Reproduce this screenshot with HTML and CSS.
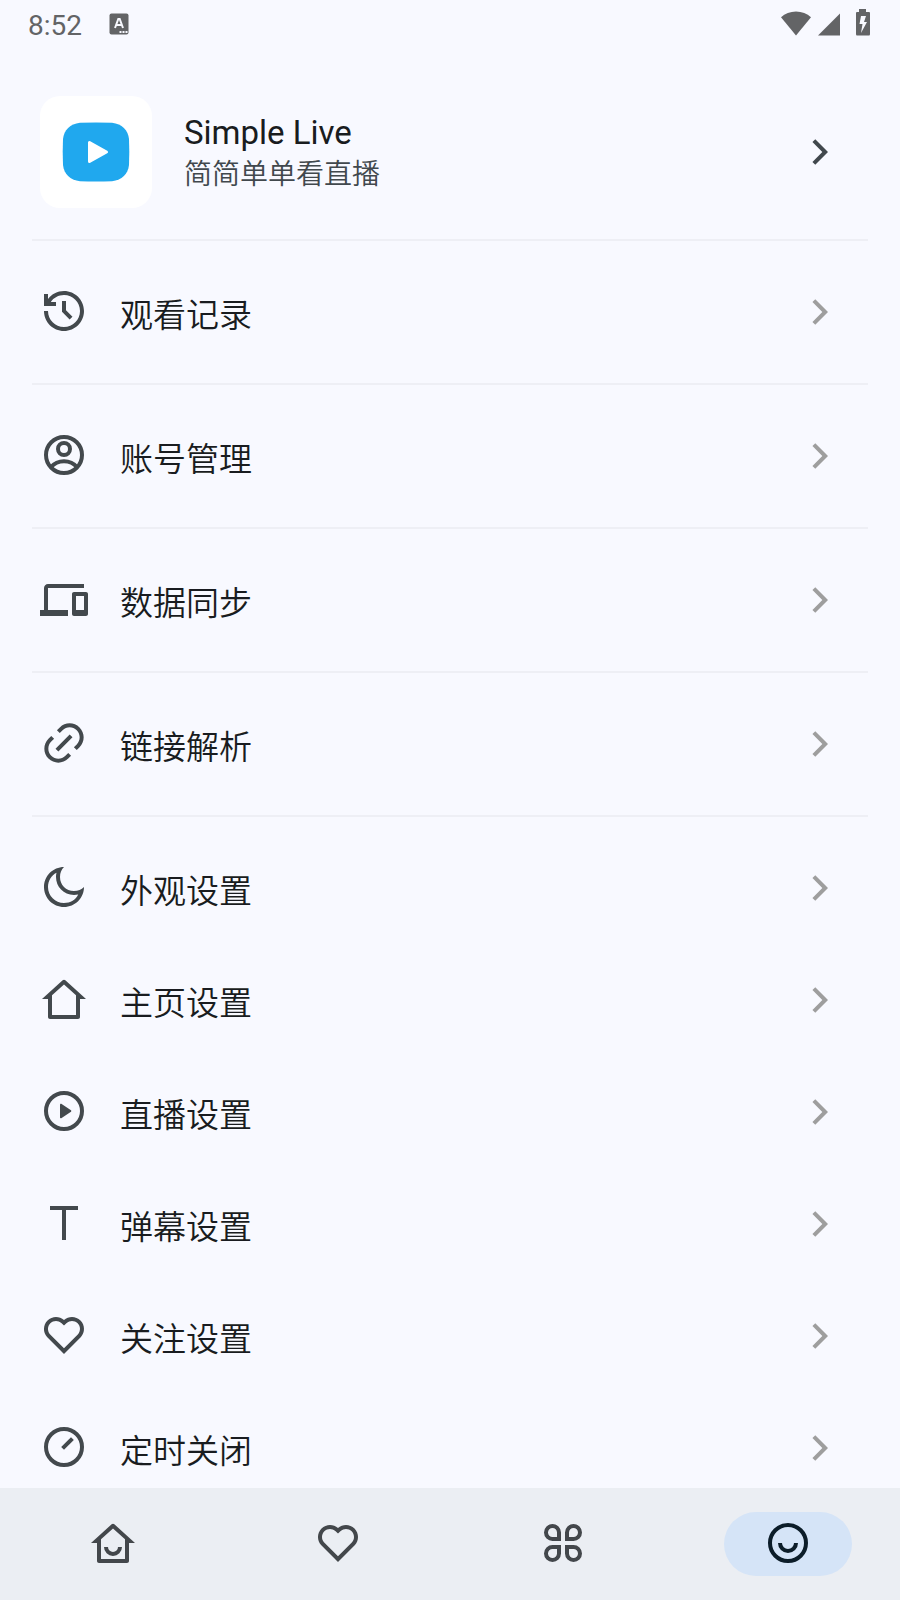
FILE: index.html
```html
<!DOCTYPE html>
<html lang="zh-CN">
<head>
<meta charset="utf-8">
<meta name="viewport" content="width=device-width, initial-scale=1">
<title>Simple Live</title>
<link rel="stylesheet" href="styles.css">
</head>
<body>
<svg class="sprite" aria-hidden="true">
  <symbol id="chevron" viewBox="0 0 24 24"><path d="M13.17 12 8.22 7.05 9.64 5.64 16 12l-6.36 6.36-1.42-1.41z"/></symbol>
  <symbol id="heart" viewBox="0 0 24 24"><path d="M12.001 4.529C14.35 2.42 17.98 2.49 20.243 4.757C22.505 7.025 22.583 10.637 20.479 12.993L12 21.485L3.521 12.993C1.417 10.637 1.496 7.019 3.757 4.757C6.022 2.493 9.645 2.417 12.001 4.529ZM18.827 6.17C17.328 4.668 14.908 4.607 13.337 6.017L12.002 7.215L10.666 6.018C9.091 4.606 6.675 4.668 5.172 6.172C3.682 7.661 3.607 10.047 4.98 11.623L12 18.654L19.02 11.623C20.394 10.047 20.319 7.665 18.827 6.17Z"/></symbol>
  <symbol id="house" viewBox="0 0 24 24"><path d="M19 22H5C4.448 22 4 21.552 4 21V12H1L11.327 2.612C11.709 2.265 12.291 2.265 12.673 2.612L23 12H20V21C20 21.552 19.552 22 19 22ZM6 20H18V10.157L12 4.703L6 10.157V20Z"/></symbol>
</svg>
<div class="app">
  <header class="status">
    <span class="clock">8:52</span>
    <svg class="status-input" viewBox="0 0 20 22"><rect x="0.500" y="0.500" width="19" height="21" rx="2"/><path class="cut" d="M6 15 9.300 6h1.400L14 15M7.500 12h5"/><path class="dots" d="M10.500 19h2M13.500 19h2M16.500 19h2"/></svg>
    <span class="status-right">
      <svg class="wifi" viewBox="0 0 32 26"><path d="M16 25.500 1 7.200C5 3.600 10.200 1.500 16 1.500s11 2.100 15 5.700z"/></svg>
      <svg class="signal" viewBox="0 0 24 24"><path d="M1 23.500 23 1.500v22z"/></svg>
      <svg class="battery" viewBox="0 0 16 28"><path fill-rule="evenodd" d="M4 1h7v3h3q1 0 1 1v21q0 1.500-1 1.500H2q-1 0-1-1.500V5q0-1 1-1h2zM6 8 4.500 16h3L6 25l6-11H9L11 8z"/></svg>
    </span>
  </header>
  <main class="content">
    <a class="profile" href="#about">
      <span class="logo"><svg viewBox="0 0 68 60"><path class="logo-bg" d="M18 .8Q34 .2 50 .8C60 2 66 8 67 17q.6 13 0 26c-1 9-7 15-17 16.200q-16 .6-32 0C8 58 2 52 1 43q-.6-13 0-26C2 8 8 2 18 .8z"/><path class="logo-play" d="M27.500 20.500v19l17-9.500z"/></svg></span>
      <span class="profile-text"><span class="title">Simple Live</span><span class="subtitle">简简单单看直播</span></span>
      <svg class="chevron strong"><use href="#chevron"/></svg>
    </a>
    <hr class="divider">
    <a class="item" href="#history"><svg class="icon" viewBox="0 0 24 24"><path d="M12 2C17.523 2 22 6.477 22 12C22 17.523 17.523 22 12 22C6.477 22 2 17.523 2 12H4C4 16.418 7.582 20 12 20C16.418 20 20 16.418 20 12C20 7.582 16.418 4 12 4C9.250 4 6.824 5.387 5.385 7.500H8V9.500H2V3.500H4V5.999C5.824 3.571 8.729 2 12 2ZM13 7V11.585L16.243 14.828L14.828 16.243L11 12.413V7Z"/></svg><span class="label">观看记录</span><svg class="chevron"><use href="#chevron"/></svg></a>
    <hr class="divider">
    <a class="item" href="#account"><svg class="icon line" viewBox="0 0 24 24"><circle cx="12" cy="12" r="9"/><circle cx="12" cy="9" r="3"/><path d="M5.400 18.200A8.700 8.700 0 0 1 18.600 18.200"/></svg><span class="label">账号管理</span><svg class="chevron"><use href="#chevron"/></svg></a>
    <hr class="divider">
    <a class="item" href="#sync"><svg class="icon" viewBox="0 0 24 24"><path d="M4 6.500h18v-2H4c-1.100 0-2 .9-2 2v11H0v3h14v-3H4v-11zm19 2h-6c-.550 0-1 .450-1 1v10c0 .550.450 1 1 1h6c.550 0 1-.450 1-1v-10c0-.550-.450-1-1-1zm-1 9h-4v-7h4v7z"/></svg><span class="label">数据同步</span><svg class="chevron"><use href="#chevron"/></svg></a>
    <hr class="divider">
    <a class="item" href="#parse"><svg class="icon" viewBox="0 0 24 24"><path d="M18.364 15.536L16.950 14.121L18.364 12.707C20.316 10.755 20.316 7.589 18.364 5.636C16.411 3.683 13.245 3.683 11.293 5.636L9.878 7.050L8.464 5.636L9.878 4.222C12.612 1.488 17.044 1.488 19.778 4.222C22.512 6.955 22.512 11.388 19.778 14.121ZM15.535 18.364L14.121 19.778C11.388 22.512 6.955 22.512 4.222 19.778C1.488 17.045 1.488 12.612 4.222 9.879L5.636 8.464L7.050 9.879L5.636 11.293C3.683 13.245 3.683 16.411 5.636 18.364C7.588 20.317 10.754 20.317 12.707 18.364L14.121 16.950ZM14.828 7.757L16.243 9.172L9.171 16.243L7.757 14.828Z"/></svg><span class="label">链接解析</span><svg class="chevron"><use href="#chevron"/></svg></a>
    <hr class="divider">
    <a class="item" href="#appearance"><svg class="icon" viewBox="0 0 24 24"><path d="M12 2C10.700 3.300 10 4.900 10 7C10 11 13 14 17 14C19.100 14 20.700 13.300 22 12C22 17.523 17.523 22 12 22C6.477 22 2 17.523 2 12C2 6.477 6.477 2 12 2ZM4 12C4 16.418 7.582 20 12 20C15.200 20 18 18.300 19.100 15.750C12.800 17 8 12.500 8 7C8 6.200 8.050 5.500 8.250 4.900C5.700 6.200 4 9.035 4 12Z"/></svg><span class="label">外观设置</span><svg class="chevron"><use href="#chevron"/></svg></a>
    <a class="item" href="#home-settings"><svg class="icon"><use href="#house"/></svg><span class="label">主页设置</span><svg class="chevron"><use href="#chevron"/></svg></a>
    <a class="item" href="#live"><svg class="icon line" viewBox="0 0 24 24"><circle cx="12" cy="12" r="9"/><path class="solid" d="M10.620 8.410 15.500 11.670Q15.900 12 15.500 12.330L10.620 15.590Q10 15.800 10 15.250V8.750Q10 8.200 10.620 8.410z"/></svg><span class="label">直播设置</span><svg class="chevron"><use href="#chevron"/></svg></a>
    <a class="item" href="#danmaku"><svg class="icon" viewBox="0 0 24 24"><path d="M13 5.500v15h-2v-15H5v-2h14v2z"/></svg><span class="label">弹幕设置</span><svg class="chevron"><use href="#chevron"/></svg></a>
    <a class="item" href="#follow"><svg class="icon"><use href="#heart"/></svg><span class="label">关注设置</span><svg class="chevron"><use href="#chevron"/></svg></a>
    <a class="item" href="#timer"><svg class="icon line" viewBox="0 0 24 24"><circle cx="12" cy="12" r="9"/><path d="M11.300 12.700 16.200 7.800"/></svg><span class="label">定时关闭</span><svg class="chevron"><use href="#chevron"/></svg></a>
  </main>
  <nav class="tabs">
    <button class="tab" type="button" aria-label="首页"><svg class="icon" viewBox="0 0 24 24"><use href="#house"/><path d="M7.500 14h2a2.500 2.500 0 0 0 5 0h2a4.500 4.500 0 0 1-9 0z"/></svg></button>
    <button class="tab" type="button" aria-label="关注"><svg class="icon"><use href="#heart"/></svg></button>
    <button class="tab" type="button" aria-label="分类"><svg class="icon line" viewBox="0 0 24 24"><path d="M10 10H6.750A3.250 3.250 0 1 1 10 6.750zM14 10h3.250A3.250 3.250 0 1 0 14 6.750zM10 14H6.750A3.250 3.250 0 1 0 10 17.250zM14 14h3.250A3.250 3.250 0 1 1 14 17.250z"/></svg></button>
    <button class="tab active" type="button" aria-label="我的" aria-current="page"><svg class="icon line" viewBox="0 0 24 24"><circle cx="12" cy="12" r="9"/><path d="M8 12a4 4 0 0 0 8 0"/></svg></button>
  </nav>
</div>
</body>
</html>
```
FILE: styles.css
```css
* { box-sizing: border-box; }

body {
  margin: 0;
  background: #f8f9ff;
  color: #191c20;
  font-family: Roboto, "Noto Sans CJK SC", sans-serif;
}

.sprite { position: absolute; width: 0; height: 0; }

.app {
  display: flex;
  flex-direction: column;
  height: 100vh;
}

.status {
  display: flex;
  flex: none;
  align-items: center;
  height: 48px;
  padding: 0 29px 0 28px;
  color: #636466;
  fill: currentColor;
}

.clock {
  padding-top: 3px;
  font-size: 28px;
  line-height: 45px;
}

.status-input { width: 20px; height: 22px; margin-left: 27px; }
.status-input .cut { fill: none; stroke: #f8f9ff; stroke-width: 2; }
.status-input .dots { fill: none; stroke: #f8f9ff; stroke-width: 2; }

.status-right {
  display: flex;
  align-items: flex-end;
  margin-bottom: 4px;
  margin-left: auto;
}

.wifi { width: 32px; height: 26px; }
.signal { width: 24px; height: 24px; margin-left: 5px; }
.battery { width: 16px; height: 28px; margin-left: 14px; }

.content {
  flex: 1;
  min-height: 0;
  padding: 32px 32px 0;
  overflow-y: auto;
  scrollbar-width: none;
}

.profile,
.item {
  display: flex;
  align-items: center;
  padding: 0 24px 0 8px;
  color: inherit;
  text-decoration: none;
}

.profile { height: 144px; gap: 32px; }
.item { height: 112px; gap: 32px; }

.logo {
  display: grid;
  flex: none;
  place-items: center;
  width: 112px;
  height: 112px;
  border-radius: 20px;
  background: #fff;
}

.logo svg { width: 68px; height: 60px; }
.logo-bg { fill: #20a8ee; }
.logo-play { fill: #fff; stroke: #fff; stroke-width: 3; stroke-linejoin: round; }

.profile-text {
  display: flex;
  flex: 1;
  flex-direction: column;
  padding-top: 2px;
}

.title { font-size: 33px; line-height: 44px; }
.subtitle { color: #41484d; font-size: 28px; font-weight: 350; line-height: 40px; }

.label {
  flex: 1;
  padding-top: 7px;
  font-size: 33px;
  font-weight: 350;
  line-height: 48px;
}

.icon {
  flex: none;
  width: 48px;
  height: 48px;
  margin-bottom: 2px;
  fill: #43494d;
}

.line { fill: none; stroke: #43494d; stroke-width: 2; }
.line .solid { fill: #43494d; stroke: none; }

.chevron {
  flex: none;
  width: 48px;
  height: 48px;
  fill: #9e9e9e;
}

.strong { fill: #41484d; }

.divider {
  height: 2px;
  margin: 15px 0;
  border: 0;
  background: #eeeff5;
}

.tabs {
  display: grid;
  flex: none;
  grid-template-columns: repeat(4, 1fr);
  place-items: center;
  height: 112px;
  background: #ebeef3;
}

.tab {
  display: grid;
  place-items: center;
  width: 128px;
  height: 64px;
  padding: 0;
  border: 0;
  border-radius: 32px;
  background: transparent;
}

.tab .icon { fill: #43474b; }
.tab .line { fill: none; stroke: #43474b; }
.active { background: #d5e4f7; }
.active .line { stroke: #0c1d29; }
```
